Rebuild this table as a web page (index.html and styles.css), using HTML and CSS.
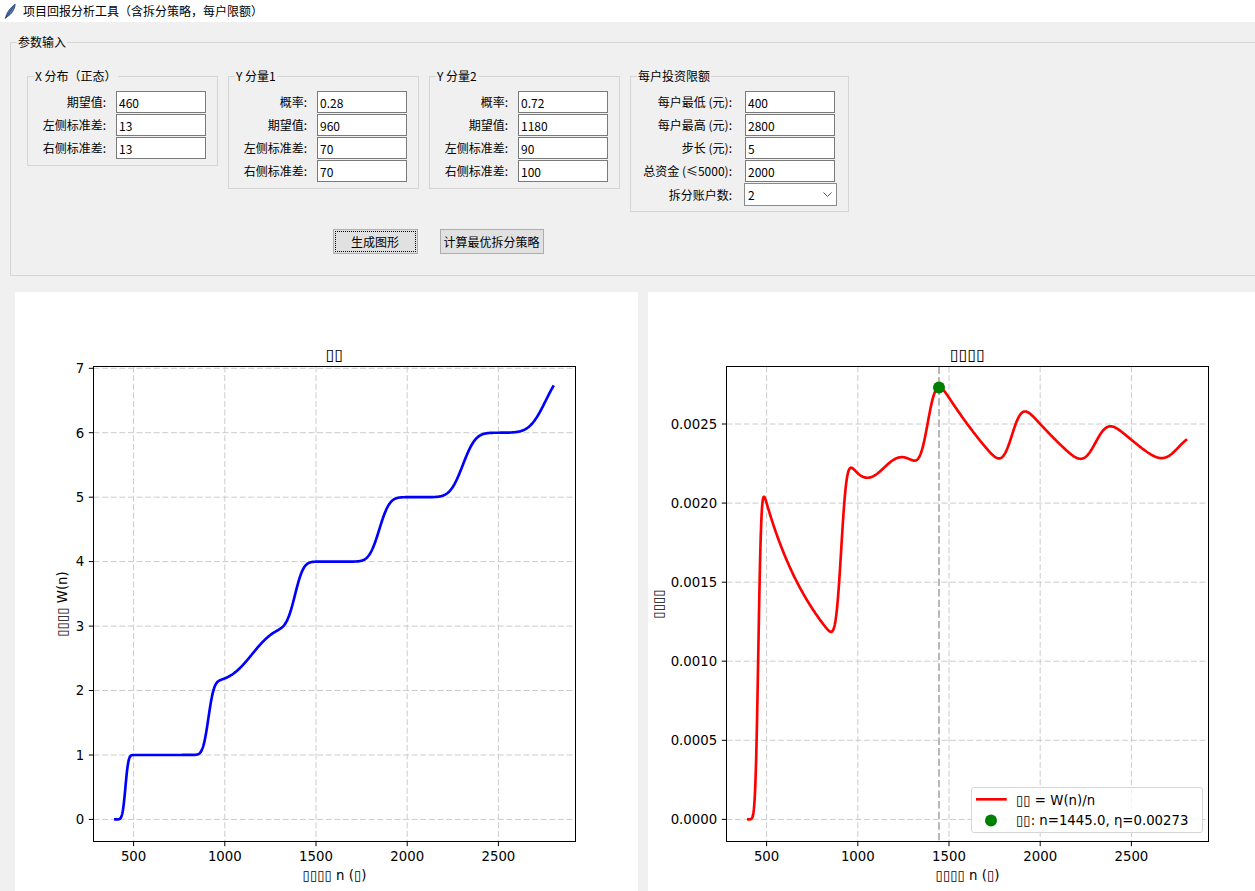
FILE: index.html
```html
<!DOCTYPE html>
<html lang="zh-CN">
<head>
<meta charset="utf-8">
<title>项目回报分析工具（含拆分策略，每户限额）</title>
<link rel="stylesheet" href="styles.css">
</head>
<body>
<div class="titlebar">
  <svg class="app-icon" viewBox="0 0 12 16" width="12" height="16">
    <path class="feather" d="M1.6 15.2 C2.2 10.5 5.5 5.2 11.2 1.2 C10.6 6.4 7.6 11.4 3.2 13.6 Z"/>
    <path class="feather-rib" d="M1.2 15.6 L9.6 3.4"/>
  </svg>
  <span class="app-title">项目回报分析工具（含拆分策略，每户限额）</span>
</div>

<section class="params">
  <span class="group-title">参数输入</span>
  <div class="param-body">
    <div class="groups">
      <div class="group">
        <span class="group-title">X 分布（正态）</span>
        <label>期望值:</label><input type="text" value="460">
        <label>左侧标准差:</label><input type="text" value="13">
        <label>右侧标准差:</label><input type="text" value="13">
      </div>
      <div class="group">
        <span class="group-title">Y 分量1</span>
        <label>概率:</label><input type="text" value="0.28">
        <label>期望值:</label><input type="text" value="960">
        <label>左侧标准差:</label><input type="text" value="70">
        <label>右侧标准差:</label><input type="text" value="70">
      </div>
      <div class="group">
        <span class="group-title">Y 分量2</span>
        <label>概率:</label><input type="text" value="0.72">
        <label>期望值:</label><input type="text" value="1180">
        <label>左侧标准差:</label><input type="text" value="90">
        <label>右侧标准差:</label><input type="text" value="100">
      </div>
      <div class="group limits">
        <span class="group-title">每户投资限额</span>
        <label>每户最低 (元):</label><input type="text" value="400">
        <label>每户最高 (元):</label><input type="text" value="2800">
        <label>步长 (元):</label><input type="text" value="5">
        <label>总资金 (≤5000):</label><input type="text" value="2000">
        <label>拆分账户数:</label>
        <div class="combo"><span>2</span><svg class="chevron" width="9" height="5" viewBox="0 0 9 5"><polyline points="0.5,0.5 4.5,4.5 8.5,0.5"/></svg></div>
      </div>
    </div>
    <div class="buttons">
      <button class="btn btn-plot focused" type="button">生成图形</button>
      <button class="btn btn-opt" type="button">计算最优拆分策略</button>
    </div>
  </div>
</section>

<div class="charts">
  <svg class="figure" width="623" height="623" viewBox="0 0 623 623">
    <g class="grid">
      <line x1="118.6" y1="74.5" x2="118.6" y2="549.5"/>
      <line x1="209.8" y1="74.5" x2="209.8" y2="549.5"/>
      <line x1="301.0" y1="74.5" x2="301.0" y2="549.5"/>
      <line x1="392.2" y1="74.5" x2="392.2" y2="549.5"/>
      <line x1="483.4" y1="74.5" x2="483.4" y2="549.5"/>
      <line x1="78.5" y1="527.4" x2="560.5" y2="527.4"/>
      <line x1="78.5" y1="463.0" x2="560.5" y2="463.0"/>
      <line x1="78.5" y1="398.5" x2="560.5" y2="398.5"/>
      <line x1="78.5" y1="334.1" x2="560.5" y2="334.1"/>
      <line x1="78.5" y1="269.6" x2="560.5" y2="269.6"/>
      <line x1="78.5" y1="205.2" x2="560.5" y2="205.2"/>
      <line x1="78.5" y1="140.7" x2="560.5" y2="140.7"/>
      <line x1="78.5" y1="76.3" x2="560.5" y2="76.3"/>
    </g>
    <path id="curveW" class="curve curve-w" d="M100 527"/>
    <rect class="ax-frame" x="78.5" y="74.5" width="482" height="475"/>
    <g class="ticks">
      <line x1="118.6" y1="549.5" x2="118.6" y2="554.2"/>
      <line x1="209.8" y1="549.5" x2="209.8" y2="554.2"/>
      <line x1="301.0" y1="549.5" x2="301.0" y2="554.2"/>
      <line x1="392.2" y1="549.5" x2="392.2" y2="554.2"/>
      <line x1="483.4" y1="549.5" x2="483.4" y2="554.2"/>
      <line x1="78.5" y1="527.4" x2="73.8" y2="527.4"/>
      <line x1="78.5" y1="463.0" x2="73.8" y2="463.0"/>
      <line x1="78.5" y1="398.5" x2="73.8" y2="398.5"/>
      <line x1="78.5" y1="334.1" x2="73.8" y2="334.1"/>
      <line x1="78.5" y1="269.6" x2="73.8" y2="269.6"/>
      <line x1="78.5" y1="205.2" x2="73.8" y2="205.2"/>
      <line x1="78.5" y1="140.7" x2="73.8" y2="140.7"/>
      <line x1="78.5" y1="76.3" x2="73.8" y2="76.3"/>
    </g>
    <g class="tick-x">
      <text x="118.6" y="568.8">500</text>
      <text x="209.8" y="568.8">1000</text>
      <text x="301.0" y="568.8">1500</text>
      <text x="392.2" y="568.8">2000</text>
      <text x="483.4" y="568.8">2500</text>
    </g>
    <g class="tick-y">
      <text x="69.2" y="532.2">0</text>
      <text x="69.2" y="467.8">1</text>
      <text x="69.2" y="403.3">2</text>
      <text x="69.2" y="338.9">3</text>
      <text x="69.2" y="274.4">4</text>
      <text x="69.2" y="210.0">5</text>
      <text x="69.2" y="145.5">6</text>
      <text x="69.2" y="81.1">7</text>
    </g>
    <text class="ax-title" x="319.5" y="67.5">▯▯</text>
    <text class="ax-label" x="319.5" y="587.5">▯▯▯▯ n (▯)</text>
    <text class="ax-label" transform="translate(51.5 312) rotate(-90)">▯▯▯▯ W(n)</text>
  </svg>

  <svg class="figure" width="623" height="623" viewBox="0 0 623 623">
    <g class="grid">
      <line x1="118.6" y1="74.5" x2="118.6" y2="549.5"/>
      <line x1="209.8" y1="74.5" x2="209.8" y2="549.5"/>
      <line x1="301.0" y1="74.5" x2="301.0" y2="549.5"/>
      <line x1="392.2" y1="74.5" x2="392.2" y2="549.5"/>
      <line x1="483.4" y1="74.5" x2="483.4" y2="549.5"/>
      <line x1="78.5" y1="527.4" x2="560.5" y2="527.4"/>
      <line x1="78.5" y1="448.3" x2="560.5" y2="448.3"/>
      <line x1="78.5" y1="369.2" x2="560.5" y2="369.2"/>
      <line x1="78.5" y1="290.2" x2="560.5" y2="290.2"/>
      <line x1="78.5" y1="211.1" x2="560.5" y2="211.1"/>
      <line x1="78.5" y1="132.0" x2="560.5" y2="132.0"/>
    </g>
    <line class="vline" x1="291.0" y1="74.5" x2="291.0" y2="549.5"/>
    <path id="curveEta" class="curve curve-eta" d="M100 527"/>
    <circle class="best-dot" cx="291.0" cy="95.6" r="6"/>
    <rect class="ax-frame" x="78.5" y="74.5" width="482" height="475"/>
    <g class="ticks">
      <line x1="118.6" y1="549.5" x2="118.6" y2="554.2"/>
      <line x1="209.8" y1="549.5" x2="209.8" y2="554.2"/>
      <line x1="301.0" y1="549.5" x2="301.0" y2="554.2"/>
      <line x1="392.2" y1="549.5" x2="392.2" y2="554.2"/>
      <line x1="483.4" y1="549.5" x2="483.4" y2="554.2"/>
      <line x1="78.5" y1="527.4" x2="73.8" y2="527.4"/>
      <line x1="78.5" y1="448.3" x2="73.8" y2="448.3"/>
      <line x1="78.5" y1="369.2" x2="73.8" y2="369.2"/>
      <line x1="78.5" y1="290.2" x2="73.8" y2="290.2"/>
      <line x1="78.5" y1="211.1" x2="73.8" y2="211.1"/>
      <line x1="78.5" y1="132.0" x2="73.8" y2="132.0"/>
    </g>
    <g class="tick-x">
      <text x="118.6" y="568.8">500</text>
      <text x="209.8" y="568.8">1000</text>
      <text x="301.0" y="568.8">1500</text>
      <text x="392.2" y="568.8">2000</text>
      <text x="483.4" y="568.8">2500</text>
    </g>
    <g class="tick-y">
      <text x="69.2" y="532.2">0.0000</text>
      <text x="69.2" y="453.1">0.0005</text>
      <text x="69.2" y="374.0">0.0010</text>
      <text x="69.2" y="295.0">0.0015</text>
      <text x="69.2" y="215.9">0.0020</text>
      <text x="69.2" y="136.8">0.0025</text>
    </g>
    <text class="ax-title" x="319.5" y="67.5">▯▯▯▯</text>
    <text class="ax-label" x="319.5" y="587.5">▯▯▯▯ n (▯)</text>
    <text class="ax-label" transform="translate(14.5 312) rotate(-90)">▯▯▯▯</text>
    <g class="legend">
      <rect class="legend-box" x="323.5" y="495.5" width="231" height="45" rx="2.5"/>
      <line class="legend-line" x1="328" y1="507.3" x2="358.7" y2="507.3"/>
      <text class="legend-text" x="368" y="512.6">▯▯ = W(n)/n</text>
      <circle class="best-dot" cx="343" cy="528.6" r="6"/>
      <text class="legend-text" x="368" y="533">▯▯: n=1445.0, η=0.00273</text>
    </g>
  </svg>
</div>
<script src="script.js"></script>
</body>
</html>
```

FILE: styles.css
```css
body {
  margin: 0;
  width: 1255px;
  height: 891px;
  overflow: hidden;
  background: #f0f0f0;
  font-family: "Noto Sans CJK SC", sans-serif;
  font-size: 12px;
  color: #000;
}

/* window title bar */
.titlebar {
  height: 22px;
  background: #fff;
  display: flex;
  align-items: center;
}
.app-icon {
  flex: none;
  margin-left: 4px;
  margin-right: 7px;
}
.feather {
  fill: #5b7fc0;
  stroke: #1f3563;
  stroke-width: 0.8;
  stroke-linejoin: round;
}
.feather-rib {
  stroke: #1f3563;
  stroke-width: 0.8;
  fill: none;
}
.app-title {
  line-height: 22px;
  white-space: nowrap;
}

/* parameter frame */
.params {
  position: relative;
  box-sizing: border-box;
  width: 1270px;
  margin: 20px 0 0 10px;
  border: 1px solid #d5d5d5;
  padding: 33px 0 21px 16px;
}
.group-title {
  position: absolute;
  top: -9px;
  left: 6px;
  padding: 0 1px;
  line-height: 16px;
  background: #f0f0f0;
  white-space: nowrap;
}
.param-body {
  display: flex;
  flex-direction: column;
  width: max-content;
}
.groups {
  display: flex;
  gap: 10px;
  align-items: flex-start;
}
.group {
  position: relative;
  display: grid;
  grid-template-columns: 71px 90px;
  column-gap: 10px;
  row-gap: 1px;
  padding: 14px 11px 6px 7px;
  border: 1px solid #d5d5d5;
}
.group.limits {
  grid-template-columns: 94px 90px;
  column-gap: 13px;
  padding: 14px 13px 5px 7px;
}
.group label {
  display: flex;
  justify-content: flex-end;
  align-items: center;
  line-height: 22px;
  white-space: nowrap;
}
.group input {
  box-sizing: border-box;
  width: 90px;
  height: 22px;
  margin: 0;
  padding: 0 2px;
  border: 1px solid #7a7a7a;
  background: #fff;
  font-family: "Noto Sans CJK SC", sans-serif;
  font-size: 12px;
  color: #000;
  outline: none;
}
.combo {
  box-sizing: border-box;
  width: 93px;
  height: 23px;
  margin-left: -1px;
  border: 1px solid #8a8a8a;
  background: #fff;
  display: flex;
  align-items: center;
  justify-content: space-between;
  padding: 0 4px 0 3px;
  line-height: 21px;
}
.chevron polyline {
  fill: none;
  stroke: #555;
  stroke-width: 1;
}

/* buttons */
.buttons {
  display: flex;
  justify-content: center;
  gap: 22px;
  margin-top: 17px;
}
.btn {
  box-sizing: border-box;
  height: 25px;
  margin: 0;
  padding: 0;
  border: 1px solid #adadad;
  background: #e1e1e1;
  font-family: "Noto Sans CJK SC", sans-serif;
  font-size: 12px;
  color: #000;
}
.btn-plot { width: 85px; }
.btn-opt { width: 104px; }
.btn.focused {
  outline: 1px dotted #000;
  outline-offset: -3px;
}

/* charts */
.charts {
  display: flex;
  gap: 10px;
  margin: 16px 0 0 15px;
}
.figure {
  flex: none;
  display: block;
  background: #fff;
}
.figure text {
  font-family: "DejaVu Sans", sans-serif;
  font-size: 13.3px;
  fill: #000;
}
.grid line {
  stroke: #cccccc;
  stroke-width: 1;
  stroke-dasharray: 6 2.6;
}
.ticks line {
  stroke: #000;
  stroke-width: 1;
}
.ax-frame {
  fill: none;
  stroke: #000;
  stroke-width: 1;
}
.tick-x text { text-anchor: middle; }
.tick-y text { text-anchor: end; }
.figure .ax-title {
  font-size: 16px;
  text-anchor: middle;
}
.ax-label { text-anchor: middle; }
.curve {
  fill: none;
  stroke-width: 2.66;
  stroke-linejoin: round;
  stroke-linecap: square;
}
.curve-w { stroke: #0000ff; }
.curve-eta { stroke: #ff0000; }
.vline {
  stroke: #b8b8b8;
  stroke-width: 2;
  stroke-dasharray: 7.4 3.2;
}
.best-dot { fill: #008000; }
.legend-box {
  fill: #fff;
  fill-opacity: 0.8;
  stroke: #d6d6d6;
  stroke-width: 1;
}
.legend-line {
  stroke: #ff0000;
  stroke-width: 2.66;
}
```

FILE: script.js
```js
(function () {
  function erf(x) {
    var s = x < 0 ? -1 : 1;
    x = Math.abs(x);
    var t = 1 / (1 + 0.3275911 * x);
    var y = 1 - (((((1.061405429 * t - 1.453152027) * t) + 1.421413741) * t - 0.284496736) * t + 0.254829592) * t * Math.exp(-x * x);
    return s * y;
  }
  function Phi(z) { return 0.5 * (1 + erf(z / Math.SQRT2)); }

  // [height, centre, spread] of each smooth step of W(n)
  var comps = [
    [1.00, 455, 13],
    [1.13, 910, 24],
    [0.87, 1150, 100],
    [1.00, 1385.5, 36.4],
    [1.00, 1847, 44],
    [1.00, 2305, 55],
    [1.00, 2760, 70]
  ];
  function W(n) {
    var s = 0;
    for (var i = 0; i < comps.length; i++) {
      s += comps[i][0] * Phi((n - comps[i][1]) / comps[i][2]);
    }
    return s;
  }
  function X(n) { return 78.5 + (n - 280) * 481.5 / 2640; }
  function YL(v) { return 549 - (v + 0.335) * 475 / 7.37; }
  function YR(v) { return 549 - (v + 0.0001365) * 475 / 0.003003; }

  var d1 = '', d2 = '';
  for (var n = 400; n <= 2800; n += 2) {
    var w = W(n);
    var c = n === 400 ? 'M' : 'L';
    d1 += c + X(n).toFixed(2) + ' ' + YL(w).toFixed(2);
    d2 += c + X(n).toFixed(2) + ' ' + YR(w / n).toFixed(2);
  }
  document.getElementById('curveW').setAttribute('d', d1);
  document.getElementById('curveEta').setAttribute('d', d2);
})();
```
